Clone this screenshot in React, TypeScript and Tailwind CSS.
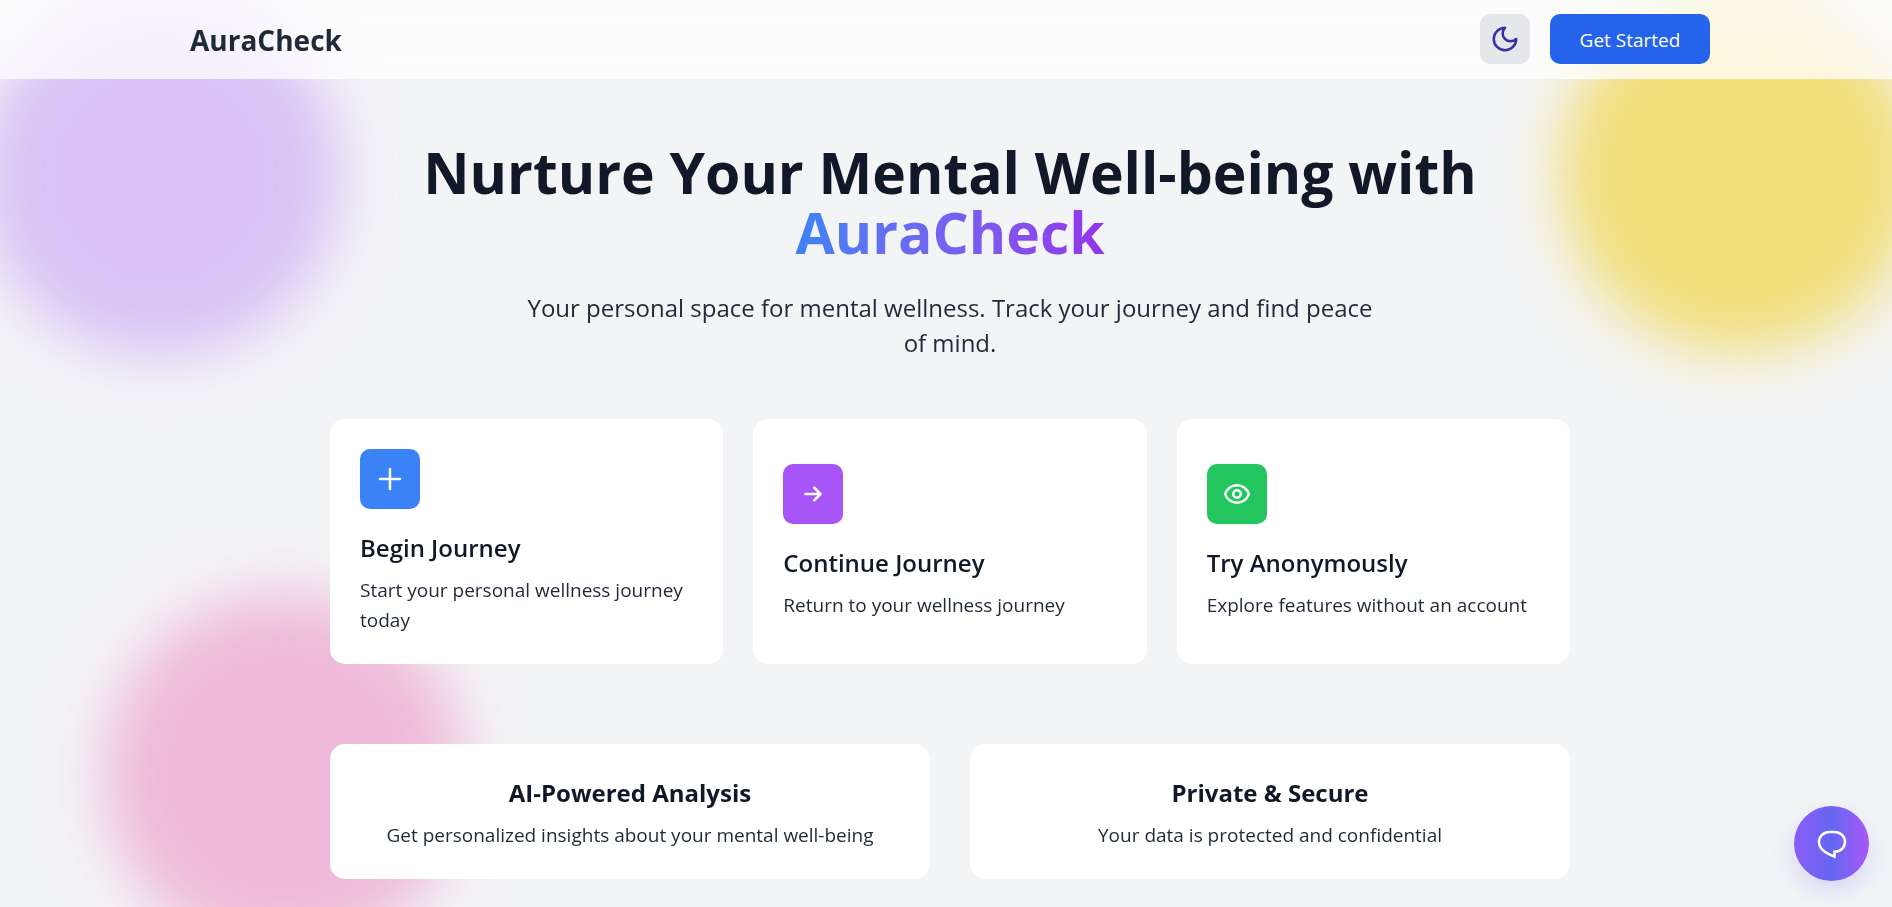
import type { ReactNode } from "react";

function Icon({ children }: { children: ReactNode }) {
  return (
    <svg
      viewBox="0 0 24 24"
      className="size-[30px]"
      fill="none"
      stroke="currentColor"
      strokeWidth={2}
      strokeLinecap="round"
      strokeLinejoin="round"
      aria-hidden="true"
    >
      {children}
    </svg>
  );
}

const journeys = [
  {
    title: "Begin Journey",
    text: "Start your personal wellness journey today",
    tint: "bg-[#3b82f6]",
    icon: <path d="M12 4v16m8-8H4" />,
  },
  {
    title: "Continue Journey",
    text: "Return to your wellness journey",
    tint: "bg-[#a855f7]",
    icon: <path d="M13 7l5 5m0 0l-5 5m5-5H6" />,
  },
  {
    title: "Try Anonymously",
    text: "Explore features without an account",
    tint: "bg-[#22c55e]",
    icon: (
      <>
        <path d="M15 12a3 3 0 11-6 0 3 3 0 016 0z" />
        <path d="M2.458 12C3.732 7.943 7.523 5 12 5c4.478 0 8.268 2.943 9.542 7-1.274 4.057-5.064 7-9.542 7-4.477 0-8.268-2.943-9.542-7z" />
      </>
    ),
  },
];

const features = [
  { title: "AI-Powered Analysis", text: "Get personalized insights about your mental well-being" },
  { title: "Private & Secure", text: "Your data is protected and confidential" },
];

export default function App() {
  return (
    <div className="relative min-h-screen overflow-hidden bg-[#f3f4f6] font-['Open_Sans','Noto_Sans',sans-serif] text-[#111827]">
      <div className="absolute -top-1 -left-5 size-[360px] rounded-full bg-[#d8b4fe] opacity-70 mix-blend-multiply blur-[30px]" />
      <div className="absolute -top-2 -right-7 size-[360px] rounded-full bg-[#fde047] opacity-70 mix-blend-multiply blur-[30px]" />
      <div className="absolute top-[594px] left-[104px] size-[360px] rounded-full bg-[#f9a8d4] opacity-70 mix-blend-multiply blur-[30px]" />

      <header className="relative bg-white/75 pl-2 backdrop-blur-md">
        <div className="mx-auto flex max-w-[1600px] items-center justify-between px-10 pt-3.5 pb-[15px]">
          <a href="#home" className="pt-0.5 text-[28px] leading-[40px] font-bold text-[#1f2937]">
            AuraCheck
          </a>
          <div className="flex items-center gap-5">
            <button
              type="button"
              aria-label="Toggle dark mode"
              className="flex size-[50px] items-center justify-center rounded-[10px] bg-[#e5e7eb] text-[#3730a3]"
            >
              <Icon>
                <path d="M12 3a6 6 0 0 0 9 9 9 9 0 1 1-9-9Z" />
              </Icon>
            </button>
            <button
              type="button"
              className="h-[50px] w-[160px] rounded-[10px] bg-[#2563eb] pt-0.5 text-[19px] leading-[30px] text-white"
            >
              Get Started
            </button>
          </div>
        </div>
      </header>

      <main className="relative pt-[63px] pb-7 pl-2">
        <div className="mx-auto max-w-[1240px]">
          <h1 className="text-center text-[57px] leading-[60px] font-bold">
            Nurture Your Mental Well-being with
            <span className="mx-auto block w-fit bg-linear-to-r from-[#3b82f6] to-[#9333ea] bg-clip-text text-transparent">
              AuraCheck
            </span>
          </h1>
          <p className="mx-auto mt-7 max-w-[850px] text-center text-[24px] leading-[35px] text-[#1f2937]">
            Your personal space for mental wellness. Track your journey and find peace of mind.
          </p>

          <div className="mt-[59px] grid grid-cols-3 gap-[30px]">
            {journeys.map((j) => (
              <button
                key={j.title}
                type="button"
                className="flex min-h-[245px] flex-col justify-center rounded-[15px] bg-white px-[30px] pt-[30px] pb-[29px] text-left"
              >
                <span className={`flex size-[60px] items-center justify-center rounded-[10px] text-white ${j.tint}`}>
                  <Icon>{j.icon}</Icon>
                </span>
                <span className="mt-[21px] text-[24px] leading-[35px] font-semibold">{j.title}</span>
                <span className="mt-2.5 text-[19px] leading-[30px] text-[#1f2937]">{j.text}</span>
              </button>
            ))}
          </div>

          <div className="mt-20 grid grid-cols-2 gap-10">
            {features.map((f) => (
              <section key={f.title} className="rounded-[15px] bg-white px-[30px] pt-[31px] pb-[29px] text-center">
                <h2 className="text-[24px] leading-[35px] font-bold">{f.title}</h2>
                <p className="mt-2.5 text-[19px] leading-[30px] text-[#1f2937]">{f.text}</p>
              </section>
            ))}
          </div>
        </div>
      </main>

      <button
        type="button"
        aria-label="Open chat"
        className="fixed right-[23px] bottom-[26px] flex size-[75px] items-center justify-center rounded-full bg-linear-to-r from-[#8b5cf6] via-[#6366f1] to-[#a855f7] text-white shadow-[0_10px_25px_rgba(99,102,241,0.2)]"
      >
        <svg viewBox="0 0 30 30" className="size-[30px]" fill="none" stroke="currentColor" strokeWidth={2.5} aria-hidden="true">
          <path d="M12.5 3h5C23.500 3 28 7.300 28 13S23.500 22.700 17.500 22.700V27.500C9 24.500 2 20.500 2 13 2 7.300 6.500 3 12.500 3Z" />
        </svg>
      </button>
    </div>
  );
}
